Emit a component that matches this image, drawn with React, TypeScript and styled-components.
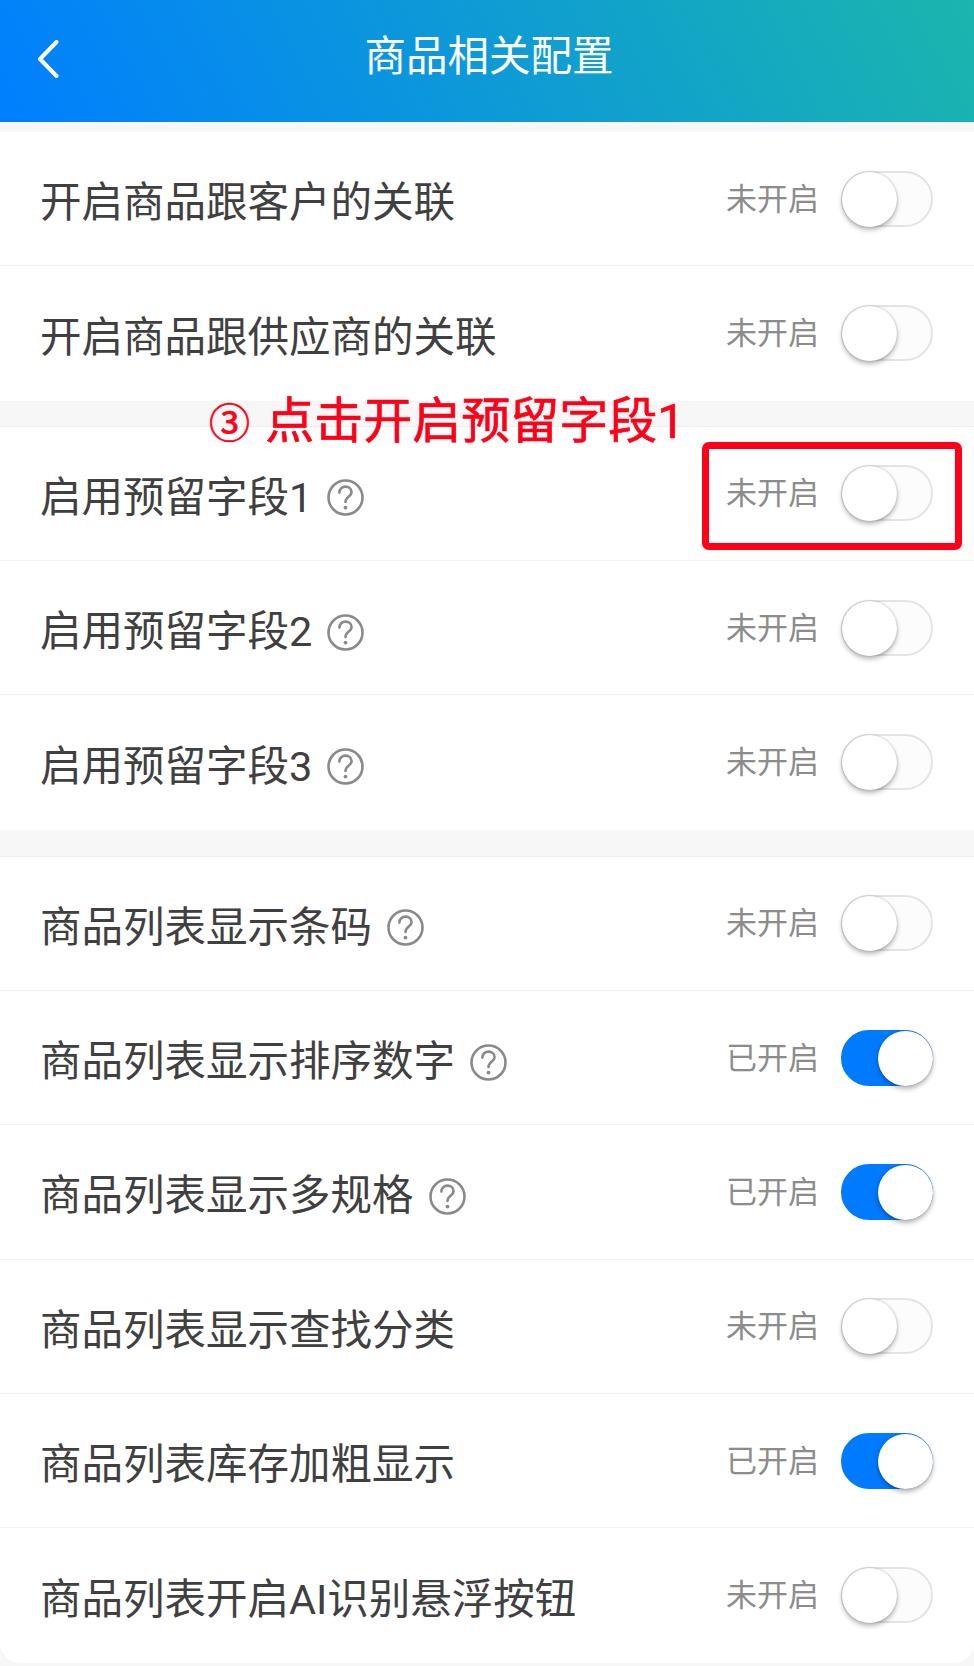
import React from 'react';
import styled, { createGlobalStyle } from 'styled-components';

const GlobalStyle = createGlobalStyle`
  html, body {
    margin: 0;
    padding: 0;
    background: #f7f7f7;
  }
  body {
    font-family: Roboto, 'Noto Sans CJK SC', sans-serif;
  }
`;

const Page = styled.div`
  position: relative;
  width: 974px;
  height: 1666px;
  overflow: hidden;
  background: #f7f7f7;
`;

const Header = styled.header`
  height: 122px;
  padding: 40px 0 0 37px;
  box-sizing: border-box;
  position: relative;
  background: linear-gradient(62deg, #007fff 0%, #1bb6ad 100%);
`;

const HeaderTitle = styled.h1`
  position: absolute;
  left: 4px;
  right: 0;
  top: 28px;
  margin: 0;
  text-align: center;
  color: #fff;
  font-size: 41.5px;
  line-height: 58px;
  font-weight: 400;
`;

const Section = styled.section<{ $gap: number; $rule?: boolean; $rounded?: boolean }>`
  background: #fff;
  margin-top: ${(props) => props.$gap}px;
  border-top: ${(props) => (props.$rule ? '1px solid #eeeeee' : 'none')};
  border-radius: ${(props) => (props.$rounded ? '0 0 20px 20px' : '0')};
`;

const Row = styled.div`
  height: 134.33px;
  box-sizing: border-box;
  padding: 0 41px 0 40px;
  display: flex;
  align-items: center;
  border-bottom: 1px solid #f2f2f2;

  &:last-child {
    border-bottom: none;
  }
`;

const RowLabel = styled.span`
  flex: 1;
  display: flex;
  align-items: center;
  gap: 15px;
  color: #404040;
  font-size: 41.5px;
  line-height: 58px;
  margin-top: 9px;
`;

const StatusText = styled.span`
  color: #8c8c8c;
  font-size: 31px;
  line-height: 40px;
  margin-right: 22px;
  margin-top: 2px;
`;

const Track = styled.div<{ $on: boolean }>`
  position: relative;
  width: 92px;
  height: 56px;
  box-sizing: border-box;
  border-radius: 28px;
  border: 2px solid ${(props) => (props.$on ? '#007aff' : '#e4e4e4')};
  background: ${(props) => (props.$on ? '#007aff' : '#fcfcfc')};
`;

const Knob = styled.div<{ $on: boolean }>`
  position: absolute;
  top: -1px;
  left: ${(props) => (props.$on ? '35px' : '-1.5px')};
  width: 55px;
  height: 55px;
  border-radius: 50%;
  background: #fff;
  box-shadow: 0 3px 5px rgba(0, 0, 0, 0.28), 0 0 2px rgba(0, 0, 0, 0.25);
`;

const Annotation = styled.div`
  position: absolute;
  left: 209px;
  top: 388px;
  color: #ff0019;
  font-size: 49px;
  line-height: 68px;
  font-weight: 400;
  -webkit-text-stroke: 0.7px #ff0019;
  white-space: nowrap;
`;

const CircleMark = styled.span`
  font-size: 41px;
  margin-right: 3px;
`;

const Highlight = styled.div`
  position: absolute;
  left: 702px;
  top: 442px;
  width: 260px;
  height: 108px;
  box-sizing: border-box;
  border: 7.5px solid #ff0019;
  border-radius: 7px;
`;

const BackIcon = () => (
  <svg width="22" height="38" viewBox="0 0 22 38" fill="none">
    <path
      d="M19.5 2 L3 19 L19.5 36"
      stroke="#fff"
      strokeWidth="4"
      strokeLinecap="round"
      strokeLinejoin="round"
    />
  </svg>
);

const HelpIcon = () => (
  <svg width="37" height="37" viewBox="0 0 37 37" fill="none">
    <circle cx="18.5" cy="18.5" r="17" stroke="#8a8a8a" strokeWidth="2.6" />
    <path
      d="M12.4 13.6 C12.4 9.8 15.2 7.6 18.5 7.6 C21.9 7.6 24.6 9.8 24.6 13.2 C24.6 17.6 18.5 17.6 18.5 23"
      stroke="#8a8a8a"
      strokeWidth="2.6"
      strokeLinecap="round"
    />
    <circle cx="18.5" cy="28.6" r="1.9" fill="#8a8a8a" />
  </svg>
);

const SettingRow = ({ label, help, on }: { label: string; help?: boolean; on?: boolean }) => (
  <Row>
    <RowLabel>
      {label}
      {help && <HelpIcon />}
    </RowLabel>
    <StatusText>{on ? '已开启' : '未开启'}</StatusText>
    <Track $on={!!on}>
      <Knob $on={!!on} />
    </Track>
  </Row>
);

export default function App() {
  return (
    <Page>
      <GlobalStyle />
      <Header>
        <BackIcon />
        <HeaderTitle>商品相关配置</HeaderTitle>
      </Header>
      <Section $gap={10}>
        <SettingRow label="开启商品跟客户的关联" />
        <SettingRow label="开启商品跟供应商的关联" />
      </Section>
      <Section $gap={25} $rule>
        <SettingRow label="启用预留字段1" help />
        <SettingRow label="启用预留字段2" help />
        <SettingRow label="启用预留字段3" help />
      </Section>
      <Section $gap={26} $rule $rounded>
        <SettingRow label="商品列表显示条码" help />
        <SettingRow label="商品列表显示排序数字" help on />
        <SettingRow label="商品列表显示多规格" help on />
        <SettingRow label="商品列表显示查找分类" />
        <SettingRow label="商品列表库存加粗显示" on />
        <SettingRow label="商品列表开启AI识别悬浮按钮" />
      </Section>
      <Annotation>
        <CircleMark>③</CircleMark> 点击开启预留字段1
      </Annotation>
      <Highlight />
    </Page>
  );
}
